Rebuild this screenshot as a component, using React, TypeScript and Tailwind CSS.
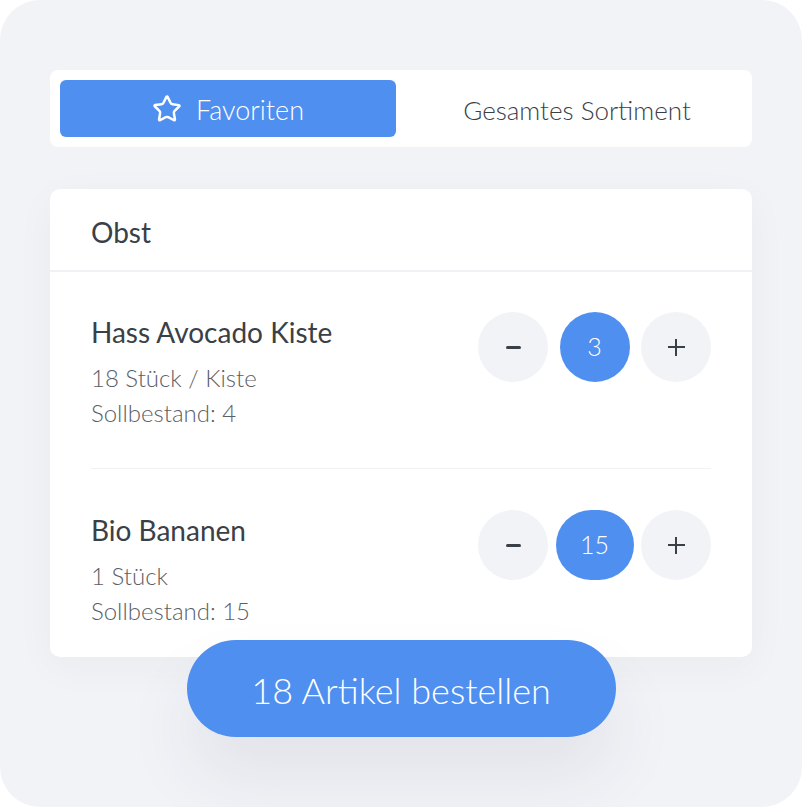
import { Star } from "lucide-react";

type Item = {
  name: string;
  unit: string;
  target: number;
  qty: number;
  pillWidth: string;
};

const items: Item[] = [
  { name: "Hass Avocado Kiste", unit: "18 Stück / Kiste", target: 4, qty: 3, pillWidth: "w-[70px]" },
  { name: "Bio Bananen", unit: "1 Stück", target: 15, qty: 15, pillWidth: "w-[78px]" },
];

function Stepper({ qty, pillWidth }: { qty: number; pillWidth: string }) {
  return (
    <div className="flex w-[233px] items-center justify-between">
      <button
        type="button"
        className="grid h-[70px] w-[70px] place-items-center rounded-full bg-[#f2f3f7]"
      >
        <span className="block h-[3px] w-[15px] rounded-sm bg-[#3a4047]" />
      </button>
      <div
        className={`grid h-[70px] ${pillWidth} place-items-center rounded-full bg-[#4f8ff0] text-[25px] font-light text-white`}
      >
        {qty}
      </div>
      <button
        type="button"
        className="relative grid h-[70px] w-[70px] place-items-center rounded-full bg-[#f2f3f7]"
      >
        <span className="absolute h-[2px] w-[17px] bg-[#3a4047]" />
        <span className="absolute h-[17px] w-[2px] bg-[#3a4047]" />
      </button>
    </div>
  );
}

export default function App() {
  return (
    <div className="min-h-screen bg-white font-['Lato',sans-serif]">
      <div className="flex h-[807px] w-[802px] flex-col rounded-[40px] bg-[#f2f3f7] px-[50px] pt-[70px]">
        <div className="grid grid-cols-2 gap-[10px] rounded-lg bg-white p-[10px]">
          <button
            type="button"
            className="flex h-[57px] items-center justify-center gap-[14px] rounded-md bg-[#4f8ff0] pt-[3px] text-[27px] font-light text-white"
          >
            <Star className="-mt-[3px] h-[30px] w-[30px]" strokeWidth={2} />
            Favoriten
          </button>
          <button
            type="button"
            className="flex h-[57px] items-center justify-center pl-[6px] pt-[3px] text-[26px] font-light text-[#3a4047]"
          >
            Gesamtes Sortiment
          </button>
        </div>

        <div className="mt-[42px] rounded-[10px] bg-white shadow-[0_10px_40px_rgba(30,40,60,0.04)]">
          <div className="flex h-[83px] items-center border-b-2 border-[#f0f1f4] px-[41px] pt-[4px] text-[28px] text-[#3a4047]">
            Obst
          </div>
          <div className="px-[41px]">
            {items.map((item, index) => (
              <div
                key={item.name}
                className={`flex items-start justify-between ${
                  index === 0
                    ? "border-b border-[#f0f1f4] pb-[40px] pt-[40px]"
                    : "pb-[31px] pt-[41px]"
                }`}
              >
                <div className="flex flex-col pt-[2px]">
                  <div className="text-[28px] leading-[36px] text-[#3a4047]">{item.name}</div>
                  <div className="mt-[10px] text-[24px] font-light leading-[35px] text-[#5a6066]">
                    {item.unit}
                  </div>
                  <div className="-mb-[2px] text-[24px] font-light leading-[35px] text-[#5a6066]">
                    Sollbestand: {item.target}
                  </div>
                </div>
                <Stepper qty={item.qty} pillWidth={item.pillWidth} />
              </div>
            ))}
          </div>
        </div>

        <div className="relative z-10 -mt-[17px] flex justify-center">
          <button
            type="button"
            className="h-[97px] w-[429px] rounded-full bg-[#4f8ff0] pt-[3px] text-[36px] font-light text-white shadow-[0_40px_70px_rgba(40,50,80,0.08)]"
          >
            18 Artikel bestellen
          </button>
        </div>
      </div>
    </div>
  );
}
